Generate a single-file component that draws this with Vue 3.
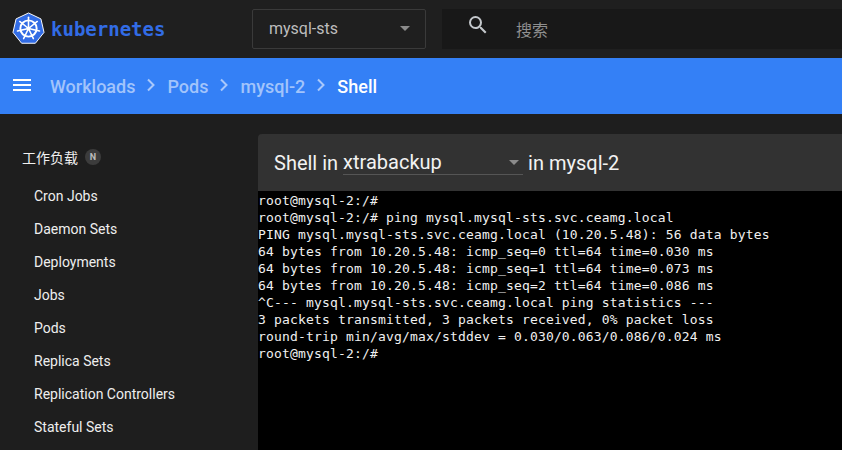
<script setup>
const nav = ['Cron Jobs','Daemon Sets','Deployments','Jobs','Pods','Replica Sets','Replication Controllers','Stateful Sets']
const crumbs = ['Workloads','Pods','mysql-2']
const lines = [
'root@mysql-2:/#',
'root@mysql-2:/# ping mysql.mysql-sts.svc.ceamg.local',
'PING mysql.mysql-sts.svc.ceamg.local (10.20.5.48): 56 data bytes',
'64 bytes from 10.20.5.48: icmp_seq=0 ttl=64 time=0.030 ms',
'64 bytes from 10.20.5.48: icmp_seq=1 ttl=64 time=0.073 ms',
'64 bytes from 10.20.5.48: icmp_seq=2 ttl=64 time=0.086 ms',
'^C--- mysql.mysql-sts.svc.ceamg.local ping statistics ---',
'3 packets transmitted, 3 packets received, 0% packet loss',
'round-trip min/avg/max/stddev = 0.030/0.063/0.086/0.024 ms',
'root@mysql-2:/#'
]
const spokes = [0,51.4,102.9,154.3,205.7,257.1,308.6]
</script>

<template>
  <div class="page">
    <header class="top">
      <div class="brand">
        <svg class="logo" width="33" height="33" viewBox="0 0 34 34">
          <path d="M17 1 L29.8 7.1 L33 21 L24.1 32.2 L9.9 32.2 L1 21 L4.2 7.1 Z" fill="#326ce5" stroke="#fff" stroke-width="1" stroke-linejoin="round"/>
          <circle cx="17" cy="17" r="8.4" fill="none" stroke="#fff" stroke-width="2"/>
          <circle cx="17" cy="17" r="2" fill="#fff"/>
          <g stroke="#fff" stroke-width="1.6" stroke-linecap="round">
            <line v-for="a in spokes" :key="a" x1="17" y1="17" x2="17" y2="5.4" :transform="`rotate(${a} 17 17)`"/>
          </g>
        </svg>
        <span class="word">kubernetes</span>
      </div>
      <div class="ns">
        <span>mysql-sts</span>
        <i class="caret"></i>
      </div>
      <div class="search">
        <svg width="24" height="24" viewBox="0 0 24 24"><path fill="#c4c8cc" d="M15.5 14h-.79l-.28-.27A6.47 6.47 0 0 0 16 9.5 6.5 6.5 0 1 0 9.5 16c1.61 0 3.09-.59 4.23-1.57l.27.28v.79l5 4.99L20.49 19l-4.99-5zm-6 0C7.01 14 5 11.99 5 9.5S7.01 5 9.5 5 14 7.01 14 9.5 11.99 14 9.5 14z"/></svg>
        <span class="placeholder">搜索</span>
      </div>
    </header>
    <div class="bar">
      <svg class="menu" width="24" height="24" viewBox="0 0 24 24"><path fill="#fff" d="M3 18h18v-2H3v2zm0-5h18v-2H3v2zm0-7v2h18V6H3z"/></svg>
      <template v-for="c in crumbs" :key="c">
        <span class="crumb">{{ c }}</span>
        <svg class="chev" width="24" height="24" viewBox="0 0 24 24"><path fill="none" stroke="#a9c8fb" stroke-width="2" d="M9 6.5l5.5 5.5-5.5 5.5"/></svg>
      </template>
      <span class="current">Shell</span>
    </div>
    <div class="main">
      <aside class="side">
        <div class="group"><span>工作负载</span><b class="badge">N</b></div>
        <a v-for="n in nav" :key="n" class="item">{{ n }}</a>
      </aside>
      <section class="card">
        <div class="head">
          <span>Shell in</span>
          <div class="select"><span>xtrabackup</span><i class="caret"></i></div>
          <span>in mysql-2</span>
        </div>
        <pre class="term"><div v-for="(l,i) in lines" :key="i" class="line">{{ l }}</div></pre>
      </section>
    </div>
  </div>
</template>

<style>
html, body { margin: 0; background: #1c1c1c; overflow: hidden; }
</style>
<style scoped>
.page { width: 842px; height: 450px; display: flex; flex-direction: column; overflow: hidden; font-family: Roboto, sans-serif; background: #1e1e1e; }
.top { height: 58px; display: flex; align-items: center; background: #1f1f1f; flex: none; }
.brand { width: 252px; display: flex; align-items: center; padding-left: 12px; gap: 6px; box-sizing: border-box; flex: none; }
.logo { flex: none; margin-top: -2px; }
.word { font-family: "DejaVu Sans Mono", monospace; font-size: 19px; font-weight: bold; color: #326ce5; letter-spacing: 0; }
.ns { width: 174px; height: 40px; box-sizing: border-box; border: 1px solid #3a3a3a; border-radius: 2px; display: flex; align-items: center; justify-content: space-between; padding: 0 15px 0 16px; color: #bdbdbd; font-size: 16px; flex: none; margin-top: -1px; }
.caret { width: 0; height: 0; border-left: 5px solid transparent; border-right: 5px solid transparent; border-top: 5px solid #8b8b8b; }
.search { margin-left: 16px; flex: 1; height: 40px; background: #181818; display: flex; align-items: center; padding-left: 24px; margin-top: -1px; }
.search svg { margin-top: -8px; }
.placeholder { margin-left: 26px; font-family: "Noto Sans CJK SC", sans-serif; font-size: 16px; color: #8f8f8f; }
.bar { height: 56px; background: #3480f6; display: flex; align-items: center; flex: none; font-size: 18px; font-weight: 500; }
.menu { margin-left: 10px; margin-right: 16px; margin-top: -2px; }
.crumb { color: #a2c4fb; }
.chev { margin: -2px 4px 0; }
.current { color: #fff; }
.main { flex: 1; display: flex; min-height: 0; }
.side { width: 258px; flex: none; padding-top: 26px; box-sizing: border-box; }
.group { height: 33px; margin-bottom: 7px; display: flex; align-items: center; padding-left: 22px; gap: 7px; font-family: "Noto Sans CJK SC", sans-serif; font-size: 14px; color: #f0f0f0; }
.badge { width: 16px; height: 16px; border-radius: 50%; background: #3c3c3c; color: #bbb; font: 700 9px Roboto, sans-serif; display: flex; align-items: center; justify-content: center; }
.item { display: block; height: 33px; line-height: 33px; padding-left: 34px; font-size: 14px; color: #eeeeee; }
.card { flex: 1; margin-top: 20px; background: #323232; border-radius: 4px 0 0 0; display: flex; flex-direction: column; min-width: 0; }
.head { height: 57px; flex: none; display: flex; align-items: center; padding-left: 16px; font-size: 20px; color: #f2f2f2; }
.select { width: 180px; height: 24px; margin: 0 5px; border-bottom: 1px solid #555; display: flex; align-items: center; justify-content: space-between; box-sizing: border-box; }
.select .caret { margin-right: 4px; }
.term { flex: 1; margin: 0; background: #000; color: #f0f0f0; font-family: "DejaVu Sans Mono", monospace; font-size: 13px; letter-spacing: .17px; padding-top: 1px; }
.line { height: 17px; line-height: 17px; white-space: pre; }
</style>
